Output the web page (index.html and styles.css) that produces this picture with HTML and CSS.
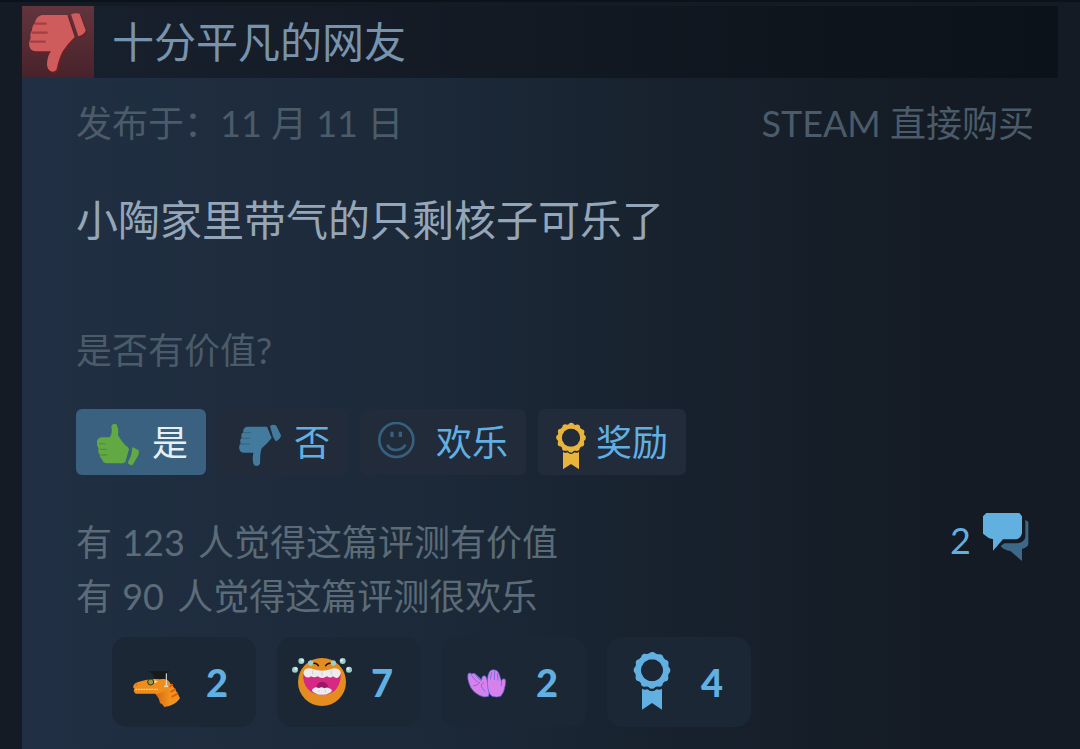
FILE: index.html
```html
<!DOCTYPE html>
<html lang="zh-CN">
<head>
    <meta charset="UTF-8">
    <meta name="viewport" content="width=device-width, initial-scale=1.0">
    <title>十分平凡的网友 - 评测</title>
    <link rel="stylesheet" href="styles.css">
</head>
<body>
    <article class="review">
        <header class="review-header">
            <div class="rating">
                <svg viewBox="66 18 216 216" aria-hidden="true">
                    <g class="rating-shadow" transform="translate(4 4)">
                        <path d="M126 45H205L224 111Q202 132 188 154Q176 176 171 208Q163 219 151 213Q141 207 141 192Q142 168 153 154H106Q91 153 88 138Q86 124 92 115Q89 101 96 91Q96 77 105 69Q108 48 126 45Z"/>
                        <path d="M213 43Q226 37 239 41L257 91Q254 104 235 109Z"/>
                    </g>
                    <g class="rating-hand">
                        <path d="M126 45H202L224 111Q202 132 188 154Q176 176 170 208Q163 219 151 213Q141 207 141 192Q142 168 153 154H106Q91 153 88 138Q86 124 92 115Q89 101 96 91Q96 77 105 69Q108 48 126 45Z"/>
                        <path d="M213 43Q226 37 239 41L257 91Q254 104 235 109Z"/>
                    </g>
                    <path class="rating-fingers" d="M104 71H140M95 98H143M90 125H137"/>
                </svg>
            </div>
            <h1>十分平凡的网友</h1>
        </header>

        <div class="review-body">
            <div class="meta">
                <span>发布于：11 月 11 日</span>
                <span>STEAM 直接购买</span>
            </div>

            <p class="content">小陶家里带气的只剩核子可乐了</p>

            <p class="question">是否有价值?</p>
            <div class="votes">
                <button type="button" class="vote active">
                    <svg class="icon thumb-up" viewBox="102 69 144 144" aria-hidden="true">
                        <path d="M111 126Q114 116 128 115H149Q158 106 154 82Q158 71 169 76Q177 88 174 109Q181 122 195 138Q205 144 207 150L196 190Q190 194 178 193H139Q128 191 126 181Q118 175 119 166Q112 158 116 149Q109 139 111 126Z"/>
                        <path d="M217 144L236 154Q239 164 232 174L217 199Q209 199 203 192Q207 183 211 175Q216 162 217 144Z"/>
                        <path class="fingers" d="M117 134H137M119 151H140M122 168H142"/>
                    </svg>
                    是
                </button>
                <button type="button" class="vote">
                    <svg class="icon thumb-down" viewBox="528 69 144 144" aria-hidden="true">
                        <path d="M560 83H621L635 117Q620 136 605 148Q600 161 600 194Q594 204 583 199Q575 190 580 161H552Q539 160 538 149Q536 139 542 133Q538 123 545 115Q541 105 550 99Q548 87 560 83Z"/>
                        <path d="M630 81Q640 74 649 80L663 109Q662 121 647 127L639 113Z"/>
                        <path class="fingers" d="M547 101H572M543 118H571M541 135H569"/>
                    </svg>
                    否
                </button>
                <button type="button" class="vote">
                    <svg class="icon smile" viewBox="86 66 144 144" aria-hidden="true">
                        <circle cx="141" cy="120" r="51"/>
                        <path d="M114 134Q120 149 140 150Q161 149 168 134"/>
                        <path class="eyes" d="M128 95V111M153 95V111"/>
                    </svg>
                    欢乐
                </button>
                <button type="button" class="vote">
                    <svg class="icon ribbon" viewBox="0 0 90 144" aria-hidden="true">
                        <circle cx="45" cy="47" r="34" stroke-width="13"/>
                        <circle class="scallop" cx="45" cy="47" r="36" stroke-width="17" pathLength="12"/>
                        <path d="M21 89Q27 95 34 91Q45 101 56 91Q63 95 69 89V142L45 126L21 142Z"/>
                    </svg>
                    奖励
                </button>
            </div>

            <div class="stats">
                <p>有 <span class="num">123</span> 人觉得这篇评测有价值<br>有 <span class="num">90</span> 人觉得这篇评测很欢乐</p>
                <a href="#comments" class="comments">2
                    <svg viewBox="189 72 138 144" aria-hidden="true">
                        <path class="back" d="M316 92L325 99V165Q324 174 306 180V216L272 187Q247 181 242 171L253 163H292Q315 159 316 143Z"/>
                        <path class="front" d="M199 72H298L306 82V132Q304 147 289 151H249L219 185V150Q207 151 199 142L189 134V82Z"/>
                    </svg>
                </a>
            </div>

            <div class="awards">
                <button type="button" class="award">
                    <svg viewBox="81 66 180 180" aria-hidden="true">
                        <defs>
                            <linearGradient id="neck" x1="0" x2="1">
                                <stop offset="0" stop-color="#d95f10"/>
                                <stop offset="0.6" stop-color="#ee931d"/>
                            </linearGradient>
                        </defs>
                        <path fill="url(#neck)" d="M162 188L196 165L205 156Q224 169 240 205Q224 228 193 231Q188 222 180 219Q177 201 162 188Z"/>
                        <path fill="#ee8d1b" d="M100 168Q103 158 117 155Q137 149 158 147H193Q211 151 211 165Q207 177 193 184L175 191H107Q101 187 101 180L104 177Q98 174 100 168Z"/>
                        <path fill="none" stroke="#e95808" stroke-width="6" d="M208 171L218 163M212 186L227 177M215 201L234 190"/>
                        <path fill="none" stroke="#f7e5c5" stroke-width="3" stroke-dasharray="6 2" d="M106 178H174"/>
                        <circle cx="152" cy="156" r="9" fill="#a69b32" stroke="#293026" stroke-width="3"/>
                        <path fill="#f3edc7" d="M163 151L174 154L164 160Z"/>
                        <circle cx="109" cy="164" r="3" fill="#cf7713"/>
                        <path fill="#17191b" d="M146 123H207V127L196 133V145Q176 151 161 144V134Z"/>
                        <path fill="none" stroke="#e7e5dd" stroke-width="3" d="M199 130V165M198 164L193 170H204L200 164"/>
                    </svg>
                    <span>2</span>
                </button>
                <button type="button" class="award">
                    <svg viewBox="576 66 180 180" aria-hidden="true">
                        <circle cx="666" cy="156" r="72" fill="#e48c20"/>
                        <path fill="#d72883" d="M610 132H722Q724 158 707 179Q691 195 666 194Q641 195 624 178Q607 158 610 132Z"/>
                        <path fill="#971b64" d="M648 175Q650 156 668 155Q684 158 687 177L666 183Z"/>
                        <path fill="#ececec" d="M614 119Q626 111 640 118Q666 126 692 118Q707 111 719 120Q726 130 717 140Q710 148 699 139Q691 146 681 139Q666 149 653 139Q642 145 633 139Q624 147 614 138Q607 129 614 119ZM637 178Q647 168 656 175Q665 169 673 175Q684 169 692 177Q700 182 690 188Q666 201 643 188Q633 184 637 178Z"/>
                        <path fill="none" stroke="#bdc3ca" stroke-width="2" d="M638 121V134M666 126V137M694 121V134M656 180V187M676 180V187"/>
                        <path fill="none" stroke="#17130f" stroke-width="4" d="M636 101Q651 96 656 109M676 109Q682 96 697 101"/>
                        <g fill="#9dcfc8">
                            <circle cx="604" cy="93" r="9"/>
                            <circle cx="585" cy="119" r="9"/>
                            <circle cx="632" cy="99" r="8"/>
                            <circle cx="700" cy="99" r="8"/>
                            <circle cx="728" cy="93" r="9"/>
                            <circle cx="747" cy="119" r="9"/>
                        </g>
                        <g fill="#e0f0e9">
                            <circle cx="607" cy="91" r="4"/>
                            <circle cx="588" cy="116" r="4"/>
                            <circle cx="725" cy="91" r="4"/>
                            <circle cx="744" cy="116" r="4"/>
                        </g>
                    </svg>
                    <span>7</span>
                </button>
                <button type="button" class="award">
                    <svg viewBox="107 66 180 180" aria-hidden="true">
                        <g fill="#d681ec" stroke="#4764ce" stroke-width="2">
                            <path d="M140 132Q144 127 151 131Q160 126 169 138L181 150Q180 138 188 137Q195 136 197 150L206 169L202 199Q188 204 174 196Q151 184 144 163Q137 145 140 132Z"/>
                            <path d="M200 177Q195 143 204 126Q209 118 217 119Q229 119 233 131L240 153Q242 144 251 147Q255 153 252 164Q249 187 238 199Q227 203 212 199Q203 193 200 177Z"/>
                            <path fill="none" d="M148 132Q156 145 169 157M160 131Q168 145 181 153M156 166Q166 171 176 155M187 158Q175 164 184 176L192 185M211 127L207 148M220 122L219 150M228 130L230 152M241 153L240 168"/>
                        </g>
                    </svg>
                    <span>2</span>
                </button>
                <button type="button" class="award award-ribbon">
                    <svg class="ribbon" viewBox="603 66 180 180" aria-hidden="true">
                        <circle cx="693" cy="121" r="42" stroke-width="18"/>
                        <circle class="scallop" cx="693" cy="121" r="44" stroke-width="22" pathLength="12"/>
                        <path d="M663 176Q670 181 679 178Q693 190 707 178Q716 181 723 176V239L693 219L663 239Z"/>
                    </svg>
                    <span>4</span>
                </button>
            </div>
        </div>
    </article>
</body>
</html>
```

FILE: styles.css
```css
:root {
    --blue: #62b0e2;
    --gold: #e8b43c;
    --muted: #4b5b69;
    --page: #141b24;
}

* {
    box-sizing: border-box;
    margin: 0;
    padding: 0;
}

body {
    min-height: 100vh;
    display: flex;
    padding: 4px 22px 0;
    border-top: 2px solid #0c121a;
    background: var(--page);
    font-family: Lato, "Noto Sans CJK SC", sans-serif;
    font-size: 36px;
    line-height: 54px;
}

svg {
    display: block;
    flex: none;
}

button {
    border: none;
    font: inherit;
    color: var(--blue);
    cursor: pointer;
}

.review {
    flex: 1;
    display: flex;
    flex-direction: column;
}

/* Header */
.review-header {
    display: flex;
    align-items: center;
    gap: 18px;
    background: linear-gradient(to right, #17212e, #141a24 45%, #0f151d 75%, #0b121a);
}

.review-header h1 {
    font-size: 42px;
    font-weight: 400;
    line-height: 60px;
    color: #7893ad;
}

.rating {
    background: linear-gradient(#62353e, #48222a);
}

.rating svg {
    width: 72px;
    height: 72px;
}

.rating-hand {
    fill: #cf5c5d;
}

.rating-shadow {
    fill: #6d1f26;
}

.rating-fingers {
    fill: none;
    stroke: #a53f43;
    stroke-width: 7;
}

/* Body */
.review-body {
    flex: 1;
    padding: 18px 24px 22px 54px;
    background: linear-gradient(to right, #212f44, #1c2938 40%, #17212d 65%, #141b24 88%);
}

.meta {
    display: flex;
    justify-content: space-between;
    color: var(--muted);
}

.num {
    margin: 0 4px 0 1px;
}

.content {
    margin-top: 40px;
    font-size: 42px;
    line-height: 60px;
    color: #94a6b8;
}

.question {
    margin-top: 73px;
    color: var(--muted);
}

.votes {
    display: flex;
    gap: 12px;
    margin-top: 32px;
}

.vote {
    display: flex;
    align-items: center;
    gap: 10px;
    height: 66px;
    padding: 0 18px;
    border-radius: 6px;
    background: #212b3a;
}

.vote.active {
    background: #3a617f;
    color: #e4eff7;
}

.icon {
    width: 48px;
    height: 48px;
    margin-top: 8px;
}

.thumb-up {
    fill: #62a944;
}

.thumb-down {
    fill: #437b9f;
}

.fingers {
    fill: none;
    stroke: #000;
    stroke-opacity: 0.15;
    stroke-width: 4;
}

.smile {
    fill: none;
    stroke: #35617f;
    stroke-width: 8;
}

.smile .eyes {
    stroke-width: 10;
}

.ribbon {
    fill: var(--gold);
    stroke: none;
}

.icon.ribbon {
    width: 30px;
}

.ribbon circle {
    fill: none;
    stroke: var(--gold);
}

.ribbon .scallop {
    stroke-linecap: round;
    stroke-dasharray: 0 1;
}

/* Stats */
.stats {
    display: flex;
    justify-content: space-between;
    align-items: flex-start;
    margin-top: 40px;
    color: #5b6c78;
}

.comments {
    display: flex;
    gap: 12px;
    margin: -2px 5px 0 0;
    color: var(--blue);
    text-decoration: none;
}

.comments svg {
    width: 46px;
    height: 48px;
}

.comments .front {
    fill: #62b0e0;
}

.comments .back {
    fill: #3c6987;
}

/* Awards */
.awards {
    display: flex;
    gap: 21px;
    margin: 14px 0 0 36px;
}

.award {
    display: flex;
    align-items: center;
    gap: 19px;
    min-width: 144px;
    height: 90px;
    padding: 0 15px;
    border-radius: 15px;
    background: #1b2735;
    font-size: 38px;
    font-weight: 900;
}

.award svg {
    width: 60px;
    height: 60px;
}

.award-ribbon .ribbon {
    fill: var(--blue);
}

.award-ribbon .ribbon circle {
    stroke: var(--blue);
}
```
